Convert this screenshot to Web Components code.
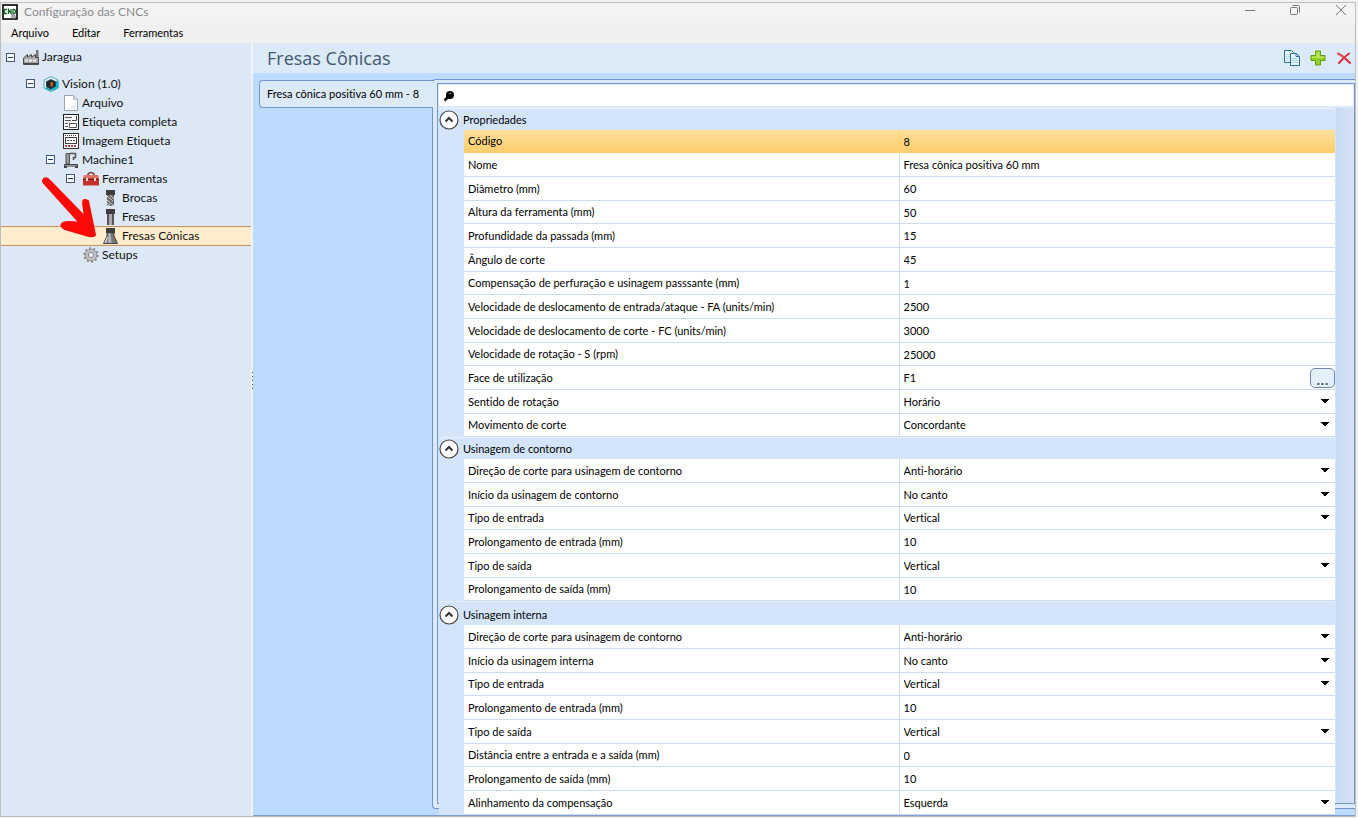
<!DOCTYPE html>
<html lang="pt-BR">
<head>
<meta charset="utf-8">
<title>Configuração das CNCs</title>
<style>
  html, body { margin: 0; height: 100%; background: #f1f1f1; }
  body { font-family: Lato, "Open Sans", sans-serif; font-size: 11px; font-variant-ligatures: none; color: #000; overflow: hidden; }
</style>
</head>
<body>
<cnc-window>
  <title-bar slot="title">Configuração das CNCs</title-bar>
  <menu-bar slot="menu"><button-item>Arquivo</button-item><button-item>Editar</button-item><button-item>Ferramentas</button-item></menu-bar>
  <nav-tree slot="tree">
    <tree-item level="0" icon="factory" open root>Jaragua</tree-item>
    <tree-item level="1" icon="cube" open>Vision (1.0)</tree-item>
    <tree-item level="2" icon="page">Arquivo</tree-item>
    <tree-item level="2" icon="label">Etiqueta completa</tree-item>
    <tree-item level="2" icon="image">Imagem Etiqueta</tree-item>
    <tree-item level="2" icon="machine" open>Machine1</tree-item>
    <tree-item level="3" icon="toolbox" open>Ferramentas</tree-item>
    <tree-item level="4" icon="drill">Brocas</tree-item>
    <tree-item level="4" icon="mill">Fresas</tree-item>
    <tree-item level="4" icon="cone" selected>Fresas Cônicas</tree-item>
    <tree-item level="3" icon="gear">Setups</tree-item>
  </nav-tree>
  <page-header slot="header">Fresas Cônicas</page-header>
  <tab-panel>
    <span slot="tab">Fresa cônica positiva 60 mm - 8</span>
    <search-box></search-box>
    <prop-group name="Propriedades" key="p"></prop-group>
    <prop-group name="Usinagem de contorno" key="c"></prop-group>
    <prop-group name="Usinagem interna" key="i"></prop-group>
  </tab-panel>
</cnc-window>

<script>
const ICONS = {
  app: `<rect x="1" y="1" width="14" height="14" fill="#fff" stroke="#000" stroke-width="1.600"/><path d="M5 5.500H2.500V9.500H5M6.500 10V5.500L9 9.500V5M11 5V9.500H12.500L13.500 8.500V6.500L12.500 5.500H11" fill="none" stroke="#17692a" stroke-width="1.300"/><circle cx="11.500" cy="12.500" r="1.800" fill="#bbb" stroke="#777"/>`,
  factory: `<path d="M13 1h2.500v8H13z" fill="#777"/><path d="M.5 9l4-3.500v2.500l4-2.500v2.500l4-2.500v3h3v7H.5z" fill="#a9a9a9" stroke="#4c4c4c"/><path d="M1 14.500h14" stroke="#444"/><path d="M2 11.500h12" stroke="#eee" stroke-width="2" stroke-dasharray="3 1"/>`,
  cube: `<path d="M8 .5l7 3.500v8l-7 3.500-7-3.500V4z" fill="#e6f3f6" stroke="#59a9bd"/><path d="M8 3l5 2.500v5.500l-5 3-5-3V5.500z" fill="#1f4a54"/><path d="M13 4.500l2.500 1v6l-6 4-.5-3 4-2z" fill="#18b3c6"/><path d="M3 11l5 2.500v2L2.500 13z" fill="#26a7b8"/><path d="M8 4l4 2v4l-4 2.500L4 10V6z" fill="#252525"/><path d="M7.500 6l3 .5-1 4h-2z" fill="#c06a34"/>`,
  page: `<path d="M1.500 .5h9l4 4v11h-13z" fill="#fff" stroke="#9da3aa"/><path d="M10.500.5v4h4z" fill="#e0e4ea" stroke="#b2b7bf"/><path d="M4 14.500l9-7v7z" fill="#edf0f4"/>`,
  label: `<rect x=".5" y=".5" width="15" height="15" fill="#f4f6f9" stroke="#222"/><path d="M2 3.500h7M2 6.500h6M2 9.500h3M2 12.500h3" stroke="#555"/><path d="M9 6.500h4.500V2" fill="none" stroke="#444"/><path d="M6.500 9.500h7v4h-7z" fill="#fff" stroke="#555"/>`,
  image: `<rect x=".5" y=".5" width="15" height="15" fill="#fff" stroke="#3b2b28"/><path d="M2 2.500h12" stroke="#333" stroke-dasharray="1 1"/><rect x="2.500" y="4.500" width="11" height="6" fill="#fff" stroke="#444"/><path d="M4 7.500h8" stroke="#444" stroke-dasharray="2 1"/><path d="M2 13h12" stroke="#b04040" stroke-width="2" stroke-dasharray="2 1"/>`,
  machine: `<path d="M3 1.500h3.500V12H3z" fill="#999" stroke="#555"/><path d="M6.500 1.500h6v4h-2V8" fill="none" stroke="#555" stroke-width="1.500"/><path d="M1.500 14v-1.500h13V14z" fill="#ddd" stroke="#444"/><path d="M1 15h3M12 15h3" stroke="#444" stroke-width="2"/>`,
  toolbox: `<path d="M5 4.500V3Q8 0 11 3v1.500" fill="none" stroke="#7b2d27" stroke-width="1.500"/><path d="M1 4h14l1 5v5.500H0V9z" fill="#c5322b"/><path d="M1 4h14l.6 3H.4z" fill="#e0706a"/><path d="M0 8.500h16" stroke="#762018"/><path d="M3 7h2v3H3zM11 7h2v3h-2z" fill="#ddd"/>`,
  drill: `<path d="M3 0h9v5H3z" fill="#3e3e3e"/><path d="M4 5h7v10l-3 1-4-1z" fill="#666"/><path d="M4 6l6 5M7 5l4 4M4 10l6 5M4 13l3 2" stroke="#d5d5d5"/>`,
  mill: `<path d="M3 0h9v5H3z" fill="#3e3e3e"/><path d="M4 5h7v11H4z" fill="#555"/><path d="M6 5h3v11H6z" fill="#aaa"/>`,
  cone: `<path d="M3 0h9v5H3z" fill="#3e3e3e"/><path d="M4 5h7v3l3.500 7.500H.5L4 8z" fill="#777" stroke="#444"/><path d="M5.500 5h2l1 10H5z" fill="#b4b4b4"/><path d="M4 9l-2.500 6H3l2-6z" fill="#eee"/>`,
  gear: `<circle cx="8" cy="8" r="6.700" fill="none" stroke="#8b8b8b" stroke-width="2" stroke-dasharray="2 2.210"/><circle cx="8" cy="8" r="4.500" fill="none" stroke="#c2c2c2" stroke-width="3"/><circle cx="8" cy="8" r="5.800" fill="none" stroke="#888" stroke-width=".8"/><circle cx="8" cy="8" r="2.600" fill="#e6eef8" stroke="#858585"/>`,
  copy: `<path d="M.5.500h7l2 2v10h-9z" fill="#e6f6fc" stroke="#286f94"/><path d="M2 4.500h5M2 6.500h5M2 8.500h5M2 10.500h3" stroke="#b5dcea"/><path d="M6.500 3.500h6l3 3v9h-9z" fill="#e6f6fc" stroke="#286f94"/><path d="M12 3.500v3h3" fill="none" stroke="#286f94"/><path d="M8 8.500h6M8 10.500h6M8 12.500h6" stroke="#a5d5e6"/>`,
  plus: `<path d="M5.500 1h5v4.500H15v5h-4.500V15h-5v-4.500H1v-5h4.500z" fill="#92cf22" stroke="#5f9e15"/><path d="M6.500 2h3v4.500H14V8H2V6.500h4.500z" fill="#bce45f"/>`,
  cross: `<path d="M2 3.500Q7 6 14 13M13 3.500Q8 7 3 13" fill="none" stroke="#e0303a" stroke-width="2" stroke-linecap="round"/><path d="M2.500 3.500l5 4" stroke="#ff7069"/>`,
  search: `<circle cx="9" cy="7" r="4" fill="#000"/><path d="M7 9l-3.500 3.500" stroke="#000" stroke-width="2.500"/><path d="M8 6l2-1" stroke="#aaa"/>`,
  min: `<path d="M4 8.500h10" stroke="#777"/>`,
  max: `<rect x="3.500" y="5.500" width="7" height="7" rx="1" fill="none" stroke="#777"/><path d="M5.500 3.500h6q1 0 1 1v6" fill="none" stroke="#777"/>`,
  close: `<path d="M3 3l10 10M13 3L3 13" stroke="#777"/>`,
  up: `<circle cx="10" cy="10" r="9" fill="#fff" stroke="#444" stroke-width="1.200"/><path d="M6.500 11.500L10 8l3.500 3.500" fill="none" stroke="#333" stroke-width="2"/>`
};
const svg = (n, s = 16) => `<svg width="${s}" height="${s}" viewBox="0 0 ${s} ${s}" aria-hidden="true">${ICONS[n]}</svg>`;
const define = (name, render) => customElements.define(name, class extends HTMLElement {
  constructor() { super(); this.attachShadow({ mode: "open" }); }
  connectedCallback() { this.shadowRoot.innerHTML = "<style>*{box-sizing:border-box}svg{display:block;flex:none}button,input,select{font:inherit;font-variant-ligatures:none;color:inherit}</style>" + render(this); }
});

define("cnc-window", () => `<style>
  :host{display:flex;flex-direction:column;height:100vh;box-sizing:border-box;padding:2px 2px 1px 0}
  .frame{flex:1;min-height:0;display:flex;flex-direction:column;border:1px solid #bcbec0;background:#bddaff}
  .body{flex:1;min-height:0;display:grid;grid-template-columns:250px 2px minmax(0,1fr)}
  .split{background:#edf1f8;display:flex;flex-direction:column;align-items:flex-end;justify-content:center;gap:3px;padding-bottom:98px}
  .split i{width:1px;height:1px;background:#35506f}
  main{display:flex;flex-direction:column;min-height:0;min-width:0}
</style><div class="frame"><slot name="title"></slot><slot name="menu"></slot>
<div class="body"><slot name="tree"></slot><div class="split"><i></i><i></i><i></i><i></i><i></i></div><main><slot name="header"></slot><slot></slot></main></div></div>`);

define("title-bar", () => `<style>
  :host{display:flex;align-items:center;height:20px;background:#f3f3f3;color:#8b8b8b;font-size:12px;line-height:16px;gap:6px;padding-left:1px}
  :host>svg{margin-bottom:2px}
  .t{flex:1;padding-bottom:2px}.b{display:flex;gap:30px;padding:0 6px 6px 0}
  button{border:0;padding:0;background:none;width:16px;height:16px}
</style>${svg("app")}<span class="t"><slot></slot></span><span class="b"><button aria-label="Minimizar">${svg("min")}</button><button aria-label="Restaurar">${svg("max")}</button><button aria-label="Fechar">${svg("close")}</button></span>`);

define("menu-bar", () => `<style>:host{display:flex;height:20px;align-items:center;gap:23px;padding-left:10px;background:#f0f0f0}</style><slot></slot>`);
define("button-item", () => `<style>:host{display:block}button{display:block;border:0;background:none;padding:0;line-height:16px}</style><button><slot></slot></button>`);

define("nav-tree", () => `<style>
  :host{display:block;position:relative;background:#dce8f6;font-size:12px;color:#111}
  .arrow{position:absolute;left:40px;top:133px;pointer-events:none}
</style><nav><slot></slot></nav><svg class="arrow" width="60" height="66" viewBox="0 0 60 66"><path d="M3 3Q5 1 8 4L44 41L42 27Q42 22 47 25L54 59Q52 61 48 60L24 53Q18 50 22 47Q26 45 39 47L3 7Q1 5 3 3Z" fill="#fe0808" stroke="#fe0808" stroke-width="2" stroke-linejoin="round"/></svg>`);

define("tree-item", el => {
  const lv = +el.getAttribute("level");
  return `<style>
  :host{display:flex;align-items:center;gap:3px;height:19px;box-sizing:border-box;padding-left:${5 + lv * 20}px;border:solid transparent;border-width:1px 0;line-height:16px}
  :host([root]){height:28px;margin-bottom:3px}
  :host([selected]){background:#ffedce;border-color:#cf8f58;height:20px;margin-bottom:-1px}
  button{width:9px;height:9px;border:1px solid #41597a;background:linear-gradient(#27405f,#27405f) center/5px 1px no-repeat #f8fbff;padding:0;margin-right:5px}
  .s{width:9px;margin-right:5px}
  a{color:inherit;text-decoration:none;white-space:nowrap}
  </style>${el.hasAttribute("open") ? `<button aria-label="Recolher"></button>` : `<span class="s"></span>`}${svg(el.getAttribute("icon"))}<a href="#"><slot></slot></a>`;
});

define("page-header", () => `<style>
  :host{display:flex;flex:none;align-items:center;height:30px;background:#dce9f7;padding:0 3px 0 14px;color:#405a73}
  h1{flex:1;margin:0;font-family:"Open Sans","Noto Sans",sans-serif;font-size:18px;line-height:26px;font-weight:400}
  .b{display:flex;gap:10px}button{border:0;padding:0;background:none}
</style><h1><slot></slot></h1><span class="b"><button aria-label="Copiar">${svg("copy")}</button><button aria-label="Adicionar">${svg("plus")}</button><button aria-label="Excluir">${svg("cross")}</button></span>`);

define("tab-panel", () => `<style>
  :host{display:flex;flex:1;min-height:0;box-sizing:border-box;padding:6px 0 6px 6px;border-bottom:1px solid #7f9fce}
  .tab{position:relative;z-index:1;flex:none;width:174px;height:28px;margin:1px -1px 0 0;border:1px solid #7397cb;border-right:0;border-radius:4px 0 0 4px;background:#dce9f7;padding:0 0 1px 7px;text-align:left;white-space:nowrap}
  .outer{flex:1;min-width:0;min-height:0;display:flex;border:1px solid #6f94ca;border-right:0;border-radius:4px 0 0 4px;background:#dce9f9;padding:3px 0 4px 4px}
  .inner{flex:1;min-width:0;min-height:0;border:1px solid #7397cb;background:linear-gradient(90deg,#c7daf3,#d5e2f6) right/18px 100% no-repeat #d4e5fb}
</style><button class="tab"><slot name="tab"></slot></button><div class="outer"><div class="inner"><slot></slot></div></div>`);

define("search-box", () => `<style>
  :host{display:flex;align-items:center;height:24px;box-sizing:border-box;background:#fff;border:solid #dce9f9;border-width:1px 1px 2px;padding-left:2px}
  input{flex:1;border:0;outline:0;background:none;height:18px}
</style>${svg("search")}<input type="text" aria-label="Pesquisar">`);

const DATA = {
  p: [["Código","8","t"],["Nome","Fresa cônica positiva 60 mm","t"],["Diâmetro (mm)","60","t"],["Altura da ferramenta (mm)","50","t"],["Profundidade da passada (mm)","15","t"],["Ângulo de corte","45","t"],["Compensação de perfuração e usinagem passsante (mm)","1","t"],["Velocidade de deslocamento de entrada/ataque - FA (units/min)","2500","t"],["Velocidade de deslocamento de corte - FC (units/min)","3000","t"],["Velocidade de rotação - S (rpm)","25000","t"],["Face de utilização","F1","b"],["Sentido de rotação","Horário","s"],["Movimento de corte","Concordante","s"]],
  c: [["Direção de corte para usinagem de contorno","Anti-horário","s"],["Início da usinagem de contorno","No canto","s"],["Tipo de entrada","Vertical","s"],["Prolongamento de entrada (mm)","10","t"],["Tipo de saída","Vertical","s"],["Prolongamento de saída (mm)","10","t"]],
  i: [["Direção de corte para usinagem de contorno","Anti-horário","s"],["Início da usinagem interna","No canto","s"],["Tipo de entrada","Vertical","s"],["Prolongamento de entrada (mm)","10","t"],["Tipo de saída","Vertical","s"],["Distância entre a entrada e a saída (mm)","0","t"],["Prolongamento de saída (mm)","10","t"],["Alinhamento da compensação","Esquerda","s"]]
};
define("prop-group", el => {
  const key = el.getAttribute("key");
  const rows = DATA[key].map(([l, v, t], i) => {
    const id = key + i;
    const ctl = t === "s" ? `<select id="${id}"><option>${v}</option></select>` : `<input id="${id}" type="text" value="${v}">`;
    return `<tr${id === "p0" ? ' class="sel"' : ""}><th scope="row"><label for="${id}">${l}</label></th><td><div>${ctl}${t === "b" ? `<button class="more" aria-label="Escolher face">...</button>` : ""}</div></td></tr>`;
  }).join("");
  return `<style>
  :host{display:block;position:relative;margin:0 19px 0 1px;background:#d4e5fb;border-radius:4px 4px 0 0;box-shadow:inset 0 1px #e8f2fe}
  :host([key=i]){padding-top:2px}
  header{display:flex;align-items:center;height:22px;gap:4px;padding:1px 0 0}
  header button{border:0;padding:0;background:none;width:20px;height:20px}
  h2{font:inherit;margin:0;line-height:16px}
  .w{padding-left:25px}
  table{width:100%;border-collapse:separate;border-spacing:0;table-layout:fixed;background:#fff}
  tr{height:24px}tr:nth-child(3n+${key === "p" ? 1 : 3}){height:23px}
  th,td{padding:0;font-weight:400;text-align:left;border-bottom:1px solid #ccdcee;line-height:16px}
  th{padding-left:4px;border-right:1px solid #ccdcee}
  tr.sel th,tr.sel td{border-color:#ffcd6c}
  tr.sel{background:linear-gradient(#ffe09a,#ffcd6c)}
  td div{display:flex;align-items:center;height:20px}
  input,select{flex:1;min-width:0;height:18px;border:0;outline:0;padding:0 0 0 4px;margin:0;background:none;appearance:none}
  select{background:linear-gradient(#000,#000) right 6px top 6px/8px 1px no-repeat,linear-gradient(#000,#000) right 7px top 7px/6px 1px no-repeat,linear-gradient(#000,#000) right 8px top 8px/4px 1px no-repeat,linear-gradient(#000,#000) right 9px top 9px/2px 1px no-repeat}
  .more{width:25px;height:20px;border:1px solid #7186a8;border-radius:5px;background:#e4effc;padding:0;font-size:18px;line-height:16px;color:#456}
  </style><header><button aria-label="Recolher">${svg("up", 20)}</button><h2>${el.getAttribute("name")}</h2></header><div class="w"><table><tbody>${rows}</tbody></table></div>`;
});
</script>
</body>
</html>
